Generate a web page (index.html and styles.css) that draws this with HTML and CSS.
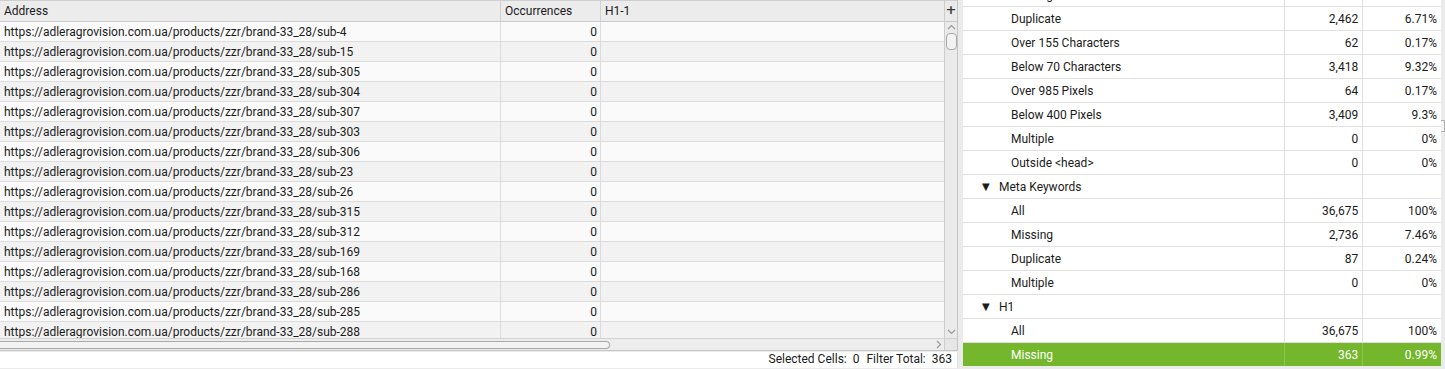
FILE: index.html
```html
<!DOCTYPE html>
<html lang="en">
<head>
  <meta charset="UTF-8" />
  <title>Crawl Results</title>
  <link rel="stylesheet" href="styles.css">
</head>
<body>

  <div class="left">
    <div class="grid">
      <div class="table">
        <div class="row head">
          <div class="c addr">Address</div>
          <div class="c occ">Occurrences</div>
          <div class="c h1">H1-1</div>
        </div>
        <div class="row"><div class="c addr">https://adleragrovision.com.ua/products/zzr/brand-33_28/sub-4</div><div class="c occ num">0</div><div class="c h1"></div></div>
        <div class="row"><div class="c addr">https://adleragrovision.com.ua/products/zzr/brand-33_28/sub-15</div><div class="c occ num">0</div><div class="c h1"></div></div>
        <div class="row"><div class="c addr">https://adleragrovision.com.ua/products/zzr/brand-33_28/sub-305</div><div class="c occ num">0</div><div class="c h1"></div></div>
        <div class="row"><div class="c addr">https://adleragrovision.com.ua/products/zzr/brand-33_28/sub-304</div><div class="c occ num">0</div><div class="c h1"></div></div>
        <div class="row"><div class="c addr">https://adleragrovision.com.ua/products/zzr/brand-33_28/sub-307</div><div class="c occ num">0</div><div class="c h1"></div></div>
        <div class="row"><div class="c addr">https://adleragrovision.com.ua/products/zzr/brand-33_28/sub-303</div><div class="c occ num">0</div><div class="c h1"></div></div>
        <div class="row"><div class="c addr">https://adleragrovision.com.ua/products/zzr/brand-33_28/sub-306</div><div class="c occ num">0</div><div class="c h1"></div></div>
        <div class="row"><div class="c addr">https://adleragrovision.com.ua/products/zzr/brand-33_28/sub-23</div><div class="c occ num">0</div><div class="c h1"></div></div>
        <div class="row"><div class="c addr">https://adleragrovision.com.ua/products/zzr/brand-33_28/sub-26</div><div class="c occ num">0</div><div class="c h1"></div></div>
        <div class="row"><div class="c addr">https://adleragrovision.com.ua/products/zzr/brand-33_28/sub-315</div><div class="c occ num">0</div><div class="c h1"></div></div>
        <div class="row"><div class="c addr">https://adleragrovision.com.ua/products/zzr/brand-33_28/sub-312</div><div class="c occ num">0</div><div class="c h1"></div></div>
        <div class="row"><div class="c addr">https://adleragrovision.com.ua/products/zzr/brand-33_28/sub-169</div><div class="c occ num">0</div><div class="c h1"></div></div>
        <div class="row"><div class="c addr">https://adleragrovision.com.ua/products/zzr/brand-33_28/sub-168</div><div class="c occ num">0</div><div class="c h1"></div></div>
        <div class="row"><div class="c addr">https://adleragrovision.com.ua/products/zzr/brand-33_28/sub-286</div><div class="c occ num">0</div><div class="c h1"></div></div>
        <div class="row"><div class="c addr">https://adleragrovision.com.ua/products/zzr/brand-33_28/sub-285</div><div class="c occ num">0</div><div class="c h1"></div></div>
        <div class="row"><div class="c addr">https://adleragrovision.com.ua/products/zzr/brand-33_28/sub-288</div><div class="c occ num">0</div><div class="c h1"></div></div>
      </div>
      <div class="vscroll">
        <div class="vs-head">+</div>
        <div class="vs-track">
          <svg class="chev" width="9" height="6" viewBox="0 0 9 6"><path d="M1 5 L4.5 1.5 L8 5" fill="none" stroke="#9a9a9a" stroke-width="1.2"/></svg>
          <div class="vs-thumb"></div>
          <div class="vs-fill"></div>
          <svg class="chev" width="9" height="6" viewBox="0 0 9 6"><path d="M1 1 L4.5 4.5 L8 1" fill="none" stroke="#9a9a9a" stroke-width="1.2"/></svg>
        </div>
      </div>
    </div>
    <div class="hscroll">
      <div class="hs-track">
        <div class="hs-thumb"></div>
        <svg class="chev-r" width="6" height="9" viewBox="0 0 6 9"><path d="M1 1 L4.5 4.5 L1 8" fill="none" stroke="#9a9a9a" stroke-width="1.2"/></svg>
      </div>
      <div class="hs-corner"></div>
    </div>
    <div class="status">
      <span>Selected Cells:</span><span>0</span><span class="sp">Filter Total:</span><span>363</span>
    </div>
  </div>

  <div class="right">
    <div class="tree">
      <div class="trow"><div class="lbl child">Missing</div><div class="cnt"></div><div class="pct"></div></div>
      <div class="trow"><div class="lbl child">Duplicate</div><div class="cnt">2,462</div><div class="pct">6.71%</div></div>
      <div class="trow"><div class="lbl child">Over 155 Characters</div><div class="cnt">62</div><div class="pct">0.17%</div></div>
      <div class="trow"><div class="lbl child">Below 70 Characters</div><div class="cnt">3,418</div><div class="pct">9.32%</div></div>
      <div class="trow"><div class="lbl child">Over 985 Pixels</div><div class="cnt">64</div><div class="pct">0.17%</div></div>
      <div class="trow"><div class="lbl child">Below 400 Pixels</div><div class="cnt">3,409</div><div class="pct">9.3%</div></div>
      <div class="trow"><div class="lbl child">Multiple</div><div class="cnt">0</div><div class="pct">0%</div></div>
      <div class="trow"><div class="lbl child">Outside &lt;head&gt;</div><div class="cnt">0</div><div class="pct">0%</div></div>
      <div class="trow"><div class="lbl parent"><span class="tri">▼</span>Meta Keywords</div><div class="cnt"></div><div class="pct"></div></div>
      <div class="trow"><div class="lbl child">All</div><div class="cnt">36,675</div><div class="pct">100%</div></div>
      <div class="trow"><div class="lbl child">Missing</div><div class="cnt">2,736</div><div class="pct">7.46%</div></div>
      <div class="trow"><div class="lbl child">Duplicate</div><div class="cnt">87</div><div class="pct">0.24%</div></div>
      <div class="trow"><div class="lbl child">Multiple</div><div class="cnt">0</div><div class="pct">0%</div></div>
      <div class="trow"><div class="lbl parent"><span class="tri">▼</span>H1</div><div class="cnt"></div><div class="pct"></div></div>
      <div class="trow"><div class="lbl child">All</div><div class="cnt">36,675</div><div class="pct">100%</div></div>
      <div class="trow selected"><div class="lbl child">Missing</div><div class="cnt">363</div><div class="pct">0.99%</div></div>
    </div>
  </div>
  <div class="rscroll">
    <div class="rs-handle"></div>
  </div>

</body>
</html>
```

FILE: styles.css
```css
html, body {
  margin: 0;
  padding: 0;
  height: 369px;
  overflow: hidden;
}
body {
  background: #ebebeb;
  font-family: Roboto, "Liberation Sans", sans-serif;
  font-size: 12px;
  color: #1b1b1b;
  display: flex;
  align-items: flex-start;
}

/* left grid */
.left {
  width: 958px;
  display: flex;
  flex-direction: column;
}
.grid {
  height: 338px;
  display: flex;
}
.table {
  width: 944px;
  overflow: hidden;
  background: #fafafa;
}
.row {
  display: flex;
  height: 20px;
  box-sizing: border-box;
  border-bottom: 1px solid #dcdcdc;
}
.row:nth-child(odd) {
  background: #f2f2f2;
}
.row.head {
  height: 22px;
  background: #ececec;
  border-top: 1px solid #cfcfcf;
  border-bottom: 1px solid #c9c9c9;
}
.c {
  box-sizing: border-box;
  padding: 1px 4px 0;
  line-height: 19px;
  white-space: nowrap;
  overflow: hidden;
}
.head .c {
  padding-top: 0;
  line-height: 20px;
}
.addr {
  width: 501px;
  border-right: 1px solid #dcdcdc;
}
.occ {
  width: 100px;
  border-right: 1px solid #dcdcdc;
}
.h1 {
  flex: 1;
}
.num {
  text-align: right;
  padding-right: 3px;
}
.head .addr, .head .occ {
  border-right-color: #d0d0d0;
}

.vscroll {
  width: 14px;
  box-sizing: border-box;
  border-left: 1px solid #cdcdcd;
  border-right: 1px solid #c4c4c4;
  display: flex;
  flex-direction: column;
  background: #eaeaea;
}
.vs-head {
  height: 22px;
  box-sizing: border-box;
  border-top: 1px solid #cfcfcf;
  border-bottom: 1px solid #c9c9c9;
  text-align: center;
  font-family: "DejaVu Sans", sans-serif;
  font-weight: bold;
  font-size: 13px;
  line-height: 18px;
  color: #3a3a3a;
}
.vs-track {
  flex: 1;
  display: flex;
  flex-direction: column;
  align-items: center;
  padding: 2px 0 3px;
}
.chev {
  display: block;
}
.vs-thumb {
  width: 9px;
  height: 15px;
  margin-top: 3px;
  border: 1px solid #a9a9a9;
  border-radius: 4px;
  background: #f2f2f2;
}
.vs-fill {
  flex: 1;
}

.hscroll {
  height: 11px;
  display: flex;
  border-top: 1px solid #d2d2d2;
  border-bottom: 1px solid #c6c6c6;
}
.hs-track {
  width: 944px;
  background: #ededed;
  display: flex;
  align-items: center;
  justify-content: space-between;
}
.hs-thumb {
  width: 610px;
  height: 8px;
  box-sizing: border-box;
  border: 1px solid #a9a9a9;
  border-left: none;
  border-radius: 0 4px 4px 0;
  background: #f3f3f3;
}
.chev-r {
  margin-right: 2px;
}
.hs-corner {
  flex: 1;
  background: #e6e6e6;
  border-left: 1px solid #cdcdcd;
  border-right: 1px solid #c4c4c4;
}
.status {
  height: 16px;
  margin-top: 1px;
  background: #fff;
  display: flex;
  justify-content: flex-end;
  align-items: flex-start;
  gap: 6px;
  padding-right: 5px;
  line-height: 14px;
  border-right: 1px solid #e0e0e0;
}
.status .sp {
  margin-left: 1px;
}

/* right tree */
.right {
  width: 478px;
  height: 366px;
  margin-left: 5px;
  background: #fff;
  overflow: hidden;
}
.tree {
  margin-top: -17px;
}
.trow {
  display: flex;
  height: 24px;
  box-sizing: border-box;
  border-bottom: 1px solid #e0e0e0;
  padding-top: 1px;
  line-height: 22px;
}
.trow > div {
  box-sizing: border-box;
  white-space: nowrap;
}
.lbl {
  width: 323px;
  border-right: 1px solid #e0e0e0;
  margin-top: -1px;
  padding-top: 1px;
}
.cnt {
  margin-top: -1px;
  padding-top: 1px;
}
.child {
  padding-left: 48px;
}
.parent {
  padding-left: 19px;
}
.tri {
  display: inline-block;
  width: 17px;
  font-family: "DejaVu Sans", sans-serif;
  font-size: 10px;
  vertical-align: top;
}
.cnt, .pct {
  width: 78px;
  text-align: right;
  padding-right: 4px;
}
.cnt {
  border-right: 1px solid #e0e0e0;
}
.trow.selected {
  background: #74b62c;
  color: #fff;
  border-bottom-color: #74b62c;
}
.selected .lbl, .selected .cnt {
  border-right-color: #8cc452;
}

.rscroll {
  flex: 1;
  height: 369px;
  position: relative;
}
.rs-handle {
  position: absolute;
  left: 0;
  top: 120px;
  width: 4px;
  height: 12px;
  box-sizing: border-box;
  border: 1px solid #b0b0b0;
  border-left: none;
  background: #f4f4f4;
}
```
